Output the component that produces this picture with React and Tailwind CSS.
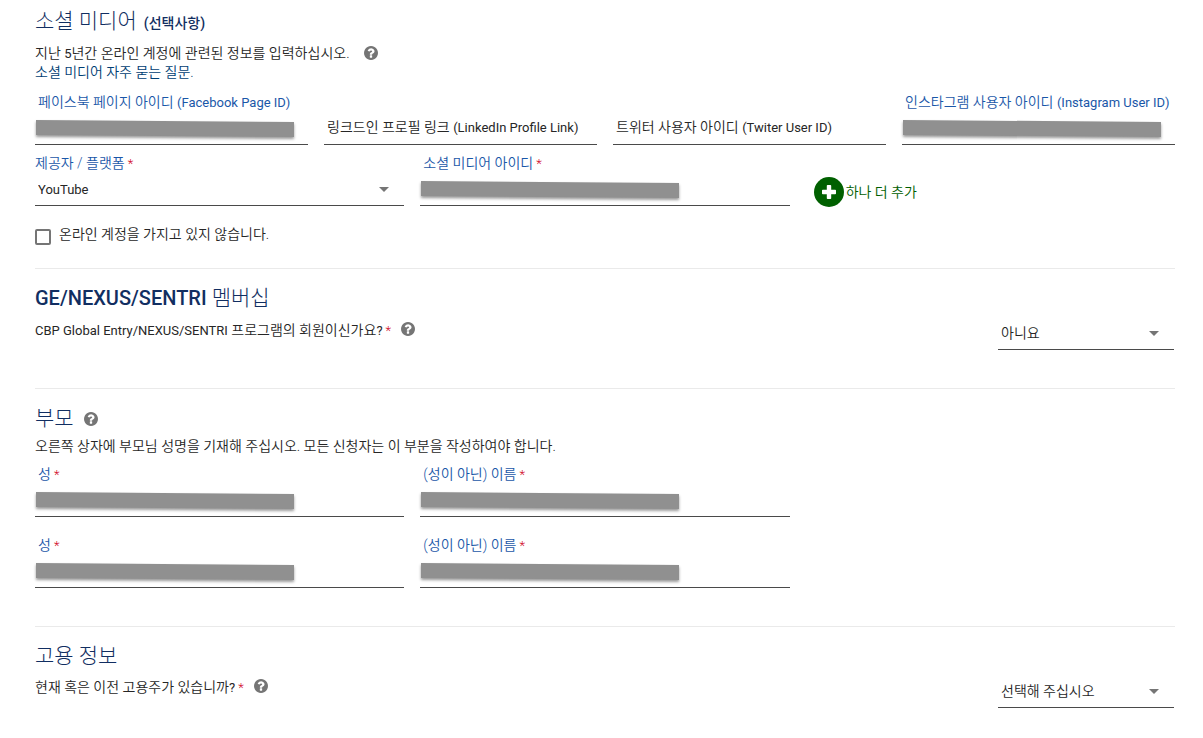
import React from "react";

function En({ children }) {
  return <span className="text-[13px] font-normal">{children}</span>;
}

function Star() {
  return <span className="ml-[3px] text-[13px] text-[#d0021b]">*</span>;
}

function Help({ label }) {
  return (
    <button type="button" aria-label={label} className="block shrink-0 text-[#757575]">
      <svg viewBox="128 128 1536 1536" className="h-3.5 w-3.5" fill="currentColor" aria-hidden="true">
        <path d="M1024 1376v-192q0-14-9-23t-23-9h-192q-14 0-23 9t-9 23v192q0 14 9 23t23 9h192q14 0 23-9t9-23zm256-672q0-88-55.5-163t-138.5-116-170-41q-243 0-371 213-15 24 8 42l132 100q7 6 19 6 16 0 25-12 53-68 86-92 34-24 86-24 48 0 85.5 26t37.5 59q0 38-20 61t-68 45q-63 28-115.5 86.5t-52.5 125.5v36q0 14 9 23t23 9h192q14 0 23-9t9-23q0-19 21.5-49.5t54.5-49.5q32-18 49-28.5t46-35 44.5-48 28-60.5 12.5-81zm384 192q0 209-103 385.5t-279.5 279.5-385.5 103-385.5-103-279.5-279.5-103-385.5 103-385.5 279.5-279.5 385.5-103 385.5 103 279.5 279.5 103 385.5z" />
      </svg>
    </button>
  );
}

function Heading({ children }) {
  return <h2 className="text-[21px] leading-7 font-light text-[#112e61]">{children}</h2>;
}

const inputClass = "block h-[31px] w-full border-0 bg-transparent px-1 outline-none";

// Floating-label field whose value is covered by a grey bar.
function MaskedField({ id, label, required }) {
  return (
    <div className="border-b border-[#4a4a4a]">
      <label htmlFor={id} className="block pl-[3px] leading-5 text-[#1a57a8]">
        {label}
        {required && <Star />}
      </label>
      <div className="relative">
        <input id={id} type="text" className={inputClass} />
        <div
          aria-hidden="true"
          className="pointer-events-none absolute top-2 left-px h-[15px] w-[258px] max-w-full skew-y-[0.45deg] bg-[#909090] shadow-[0_2px_3px_rgba(0,0,0,0.4)]"
        />
      </div>
    </div>
  );
}

function EmptyField({ id, label }) {
  return (
    <div className="relative border-b border-[#4a4a4a] pt-5">
      <input id={id} type="text" className={inputClass} />
      <label htmlFor={id} className="absolute top-[25px] left-[3px] leading-5">
        {label}
      </label>
    </div>
  );
}

function SelectBox({ id, options, label, className = "text-[14px]" }) {
  return (
    <div className="relative border-b border-[#4a4a4a]">
      <select
        id={id}
        aria-label={label}
        className={`block h-[31px] w-full appearance-none bg-transparent pr-8 pl-[3px] outline-none ${className}`}
      >
        {options.map((o) => (
          <option key={o}>{o}</option>
        ))}
      </select>
      <svg
        viewBox="0 0 10 5"
        className="pointer-events-none absolute top-[13px] right-[15px] h-[5px] w-2.5"
        fill="#757575"
        aria-hidden="true"
      >
        <path d="M0 0h10L5 5z" />
      </svg>
    </div>
  );
}

export default function App() {
  return (
    <form className="min-h-screen bg-white pt-[7px] pr-7 pb-6 pl-[35px] font-['Roboto','Noto_Sans_CJK_KR',sans-serif] text-[14px] leading-[19px] font-[350] text-[#262626]">
      <section className="pb-[23px]">
        <Heading>
          소셜 미디어 <small className="ml-0.5 text-[14px] font-medium">(선택사항)</small>
        </Heading>
        <div className="mt-[7px] flex items-start gap-3.5">
          <p>
            지난 <En>5</En>년간 온라인 계정에 관련된 정보를 입력하십시오.
          </p>
          <div className="pt-0.5">
            <Help label="소셜 미디어 도움말" />
          </div>
        </div>
        <a href="#faq" className="block w-fit text-[#003e73]">
          소셜 미디어 자주 묻는 질문.
        </a>
        <div className="mt-2.5 grid grid-cols-4 gap-4">
          <MaskedField id="facebook" label={<>페이스북 페이지 아이디 <En>(Facebook Page ID)</En></>} />
          <EmptyField id="linkedin" label={<>링크드인 프로필 링크 <En>(LinkedIn Profile Link)</En></>} />
          <EmptyField id="twitter" label={<>트위터 사용자 아이디 <En>(Twiter User ID)</En></>} />
          <MaskedField id="instagram" label={<>인스타그램 사용자 아이디 <En>(Instagram User ID)</En></>} />
        </div>
        <div className="mt-2 grid grid-cols-3 items-start gap-4">
          <div>
            <label htmlFor="provider" className="block leading-5 text-[#1a57a8]">
              제공자 / 플랫폼
              <Star />
            </label>
            <SelectBox id="provider" options={["YouTube"]} className="text-[13px] font-normal" />
          </div>
          <MaskedField id="social-id" label="소셜 미디어 아이디" required />
          <div className="pl-2">
            <button type="button" className="mt-6 flex items-center gap-0.5 text-[#005e00]">
              <svg viewBox="0 0 30 30" className="h-[30px] w-[30px]" aria-hidden="true">
                <circle cx="15" cy="15" r="15" fill="#006000" />
                <path
                  d="M13.6 8h2.8q.8 0 .8.8v4h4q.8 0 .8.8v2.8q0 .8-.8.8h-4v4q0 .8-.8.8h-2.8q-.8 0-.8-.8v-4h-4q-.8 0-.8-.8v-2.8q0-.8.8-.8h4v-4q0-.8.8-.8z"
                  fill="#fff"
                />
              </svg>
              하나 더 추가
            </button>
          </div>
        </div>
        <div className="mt-[18px] flex items-start gap-2">
          <input
            id="no-account"
            type="checkbox"
            className="mt-1 h-4 w-4 appearance-none rounded-[2px] border-2 border-[#757575] checked:bg-[#757575]"
          />
          <label htmlFor="no-account">온라인 계정을 가지고 있지 않습니다.</label>
        </div>
      </section>

      <section className="border-t border-[#eaeaea] pt-[15px] pb-[38px]">
        <Heading>
          <span className="text-[20px] font-medium">GE/NEXUS/SENTRI</span> 멤버십
        </Heading>
        <div className="mt-[9px] flex items-start justify-between">
          <div className="flex items-start gap-2.5">
            <p>
              <En>CBP Global Entry/NEXUS/SENTRI</En> 프로그램의 회원이신가요<En>?</En>
              <Star />
            </p>
            <div className="pt-px">
              <Help label="멤버십 도움말" />
            </div>
          </div>
          <div className="-mt-[3px] mr-px w-44">
            <SelectBox id="membership" label="멤버십 여부" options={["아니요", "예"]} />
          </div>
        </div>
      </section>

      <section className="border-t border-[#eaeaea] pt-[15px] pb-[38px]">
        <div className="flex items-center gap-2.5">
          <Heading>부모</Heading>
          <div className="pt-0.5">
            <Help label="부모 도움말" />
          </div>
        </div>
        <p className="mt-[5px]">
          오른쪽 상자에 부모님 성명을 기재해 주십시오. 모든 신청자는 이 부분을 작성하여야 합니다.
        </p>
        <div className="mt-2 grid grid-cols-3 gap-x-4 gap-y-[18px]">
          <MaskedField id="last-1" label="성" required />
          <MaskedField id="first-1" label="(성이 아닌) 이름" required />
          <div className="col-start-1">
            <MaskedField id="last-2" label="성" required />
          </div>
          <MaskedField id="first-2" label="(성이 아닌) 이름" required />
        </div>
      </section>

      <section className="border-t border-[#eaeaea] pt-[15px]">
        <Heading>고용 정보</Heading>
        <div className="mt-2 flex items-start justify-between">
          <div className="flex items-start gap-2.5">
            <p>
              현재 혹은 이전 고용주가 있습니까<En>?</En>
              <Star />
            </p>
            <div className="pt-px">
              <Help label="고용 정보 도움말" />
            </div>
          </div>
          <div className="-mt-0.5 mr-px w-44">
            <SelectBox id="employment" label="고용주 여부" options={["선택해 주십시오", "예", "아니요"]} />
          </div>
        </div>
      </section>
    </form>
  );
}
